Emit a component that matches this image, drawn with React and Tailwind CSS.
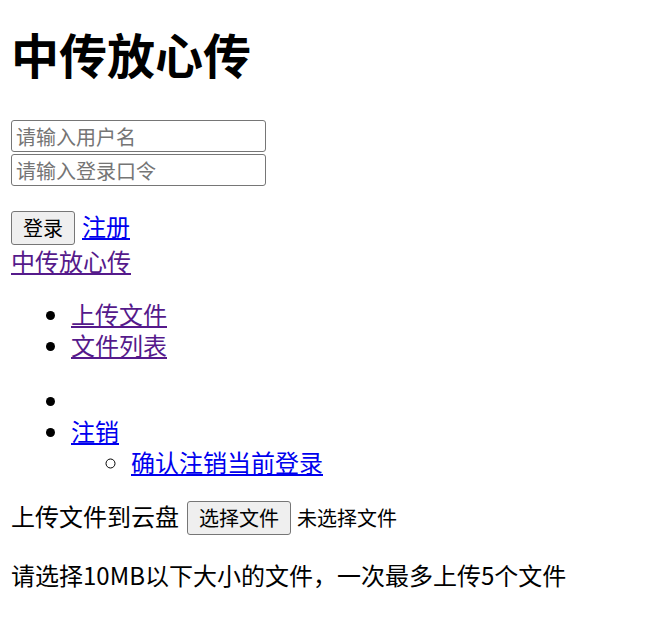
import React from 'react';

const visited = 'text-[#551A8B] underline';
const fresh = 'text-[#0000EE] underline';

export default function App() {
  return (
    <div className="min-h-screen bg-white pl-[11px] pr-[12px] pt-[29px] pb-[24px] text-[24px] leading-[31px] text-black font-['Noto_Sans_CJK_SC',sans-serif]">
      {/* Login */}
      <h1 className="text-[48px] font-bold leading-[48px] mb-[43px]">中传放心传</h1>

      <div className="flex flex-col items-start gap-[2px]">
        <input
          className="w-[255px] h-[32px] px-[4px] text-[20px] border border-[#767676] rounded-[3px] placeholder:text-[#757575] outline-none"
          placeholder="请输入用户名"
        />
        <input
          type="password"
          className="w-[255px] h-[32px] px-[4px] text-[20px] border border-[#767676] rounded-[3px] placeholder:text-[#757575] outline-none"
          placeholder="请输入登录口令"
        />
      </div>

      <div className="mt-[24px] flex items-baseline gap-[7px]">
        <button className="h-[34px] px-[11px] text-[20px] leading-[26px] bg-[#efefef] border border-[#767676] rounded-[3px]">
          登录
        </button>
        <a href="#" className={fresh}>注册</a>
      </div>

      {/* Nav */}
      <div>
        <a href="#" className={visited}>中传放心传</a>
      </div>

      <ul className="mt-[22px] pl-[60px] list-disc">
        <li><a href="#" className={visited}>上传文件</a></li>
        <li><a href="#" className={visited}>文件列表</a></li>
      </ul>

      <ul className="mt-[24px] pl-[60px] list-disc">
        <li>&nbsp;</li>
        <li>
          <a href="#" className={fresh}>注销</a>
          <ul className="pl-[60px] list-[circle]">
            <li><a href="#" className={fresh}>确认注销当前登录</a></li>
          </ul>
        </li>
      </ul>

      {/* Upload */}
      <div className="mt-[23px] flex items-baseline">
        <span>上传文件到云盘</span>
        <button className="ml-[8px] h-[34px] px-[11px] text-[20px] leading-[26px] bg-[#efefef] border border-[#767676] rounded-[3px]">
          选择文件
        </button>
        <span className="ml-[6px] text-[20px]">未选择文件</span>
      </div>

      <p className="mt-[24px]">请选择10MB以下大小的文件，一次最多上传5个文件</p>
    </div>
  );
}
